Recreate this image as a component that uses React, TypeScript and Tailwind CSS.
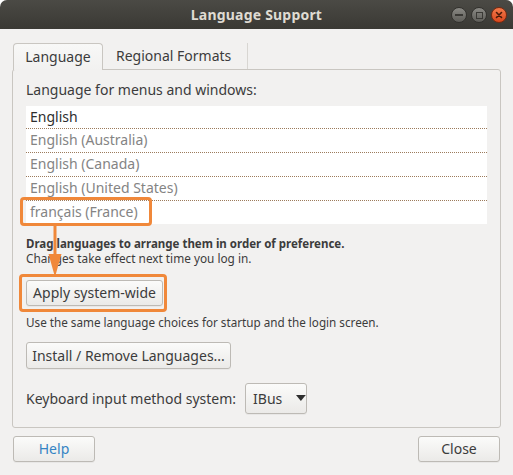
import React from "react";

function WinButtons() {
  return (
    <div className="absolute right-[6px] top-[7px] flex gap-[4px]">
      <div className="w-[16px] h-[16px] rounded-full bg-gradient-to-b from-[#8a8984] to-[#5e5d58] border border-[#33322e] flex items-center justify-center">
        <div className="w-[8px] h-[2px] bg-[#3a3935]" />
      </div>
      <div className="w-[16px] h-[16px] rounded-full bg-gradient-to-b from-[#8a8984] to-[#5e5d58] border border-[#33322e] flex items-center justify-center">
        <div className="w-[7px] h-[7px] border-[1.5px] border-[#3a3935]" />
      </div>
      <div className="w-[16px] h-[16px] rounded-full bg-gradient-to-b from-[#f47a4a] to-[#d9461c] border border-[#7a2a10] flex items-center justify-center">
        <svg width="8" height="8" viewBox="0 0 8 8">
          <path d="M1.5 1.5 L6.5 6.5 M6.5 1.5 L1.5 6.5" stroke="#4a1a08" strokeWidth="1.6" strokeLinecap="round" />
        </svg>
      </div>
    </div>
  );
}

const btn =
  "flex items-center justify-center rounded-[3px] border border-[#bdbab5] bg-gradient-to-b from-[#fbfbfa] to-[#ebeae8] text-[14px] text-[#3c3c3c] shadow-[0_1px_0_rgba(0,0,0,0.04)]";

export default function App() {
  const langs = ["English", "English (Australia)", "English (Canada)", "English (United States)", "français (France)"];
  return (
    <div className="relative w-[513px] h-[475px] bg-white overflow-hidden font-['Noto_Sans',sans-serif] text-[#3c3c3c]">
      <div className="flex flex-col h-full rounded-t-[7px] overflow-hidden bg-[#f2f1f0]">
        <div className="relative h-[29px] shrink-0 bg-gradient-to-b from-[#4b4a45] to-[#3a3934] flex items-center justify-center">
          <span className="text-[14px] font-bold text-[#dfdbd2] tracking-[0.2px]">Language Support</span>
          <WinButtons />
        </div>

        <div className="flex flex-col pl-[12px] pt-[14px]">
          <div className="flex h-[26px] pl-[1px]">
            <div className="relative z-10 w-[90px] h-[27px] border border-b-0 border-[#c9c6c1] rounded-t-[4px] bg-gradient-to-b from-[#f8f8f7] to-[#f2f1f0] flex items-center justify-center pb-[2px] text-[14px] text-[#3c3c3c]">
              Language
            </div>
            <div className="w-[145px] h-[26px] flex items-center pl-[13px] pb-[1px] text-[14px] text-[#3c3c3c] border-r border-[#d8d6d2]">
              Regional Formats
            </div>
          </div>

          <div className="w-[489px] h-[359px] border border-[#c9c6c1] rounded-[3px] flex flex-col pl-[13px] pt-[10px]">
            <div className="text-[14px] leading-[20px] text-[#3c3c3c]">Language for menus and windows:</div>
            <div className="mt-[6px] w-[461px] bg-white flex flex-col">
              {langs.map((l, i) => (
                <div
                  key={l}
                  className={
                    (i === 0 || i === 4 ? "h-[23px] " : "h-[24px] ") +
                    (i < 4 ? "border-b border-dotted border-[#9c7b5c] " : "") +
                    "flex items-center pl-[4px] pb-[2px] text-[14px] " +
                    (i === 0 ? "text-[#2e2e2e]" : "text-[#848484]")
                  }
                >
                  {l}
                </div>
              ))}
            </div>
            <div className="mt-[12px] text-[11.5px] leading-[15px] font-bold text-[#3c3c3c]">
              Drag languages to arrange them in order of preference.
            </div>
            <div className="text-[11.8px] leading-[15px] text-[#3c3c3c]">Changes take effect next time you log in.</div>
            <div className={btn + " mt-[14px] w-[137px] h-[26px] pb-[1px]"}>Apply system-wide</div>
            <div className="mt-[9px] text-[11.7px] leading-[15px] text-[#3c3c3c]">
              Use the same language choices for startup and the login screen.
            </div>
            <div className={btn + " mt-[12px] w-[205px] h-[27px] pb-[1px]"}>Install / Remove Languages...</div>
            <div className="mt-[14px] flex items-center gap-[9px]">
              <span className="text-[14px] text-[#3c3c3c]">Keyboard input method system:</span>
              <div className={btn + " w-[62px] h-[31px] justify-start pl-[7px] gap-[14px] pb-[1px]"}>
                <span>IBus</span>
                <svg width="10" height="6" viewBox="0 0 10 6">
                  <path d="M0 0 L10 0 L5 6 Z" fill="#2e2e2e" />
                </svg>
              </div>
            </div>
          </div>

          <div className="mt-[8px] w-[489px] flex justify-between pl-[1px] pr-[1px]">
            <div className={btn + " w-[82px] h-[26px] pb-[1px] text-[#3584c4]"}>Help</div>
            <div className={btn + " w-[82px] h-[26px] pb-[1px]"}>Close</div>
          </div>
        </div>
      </div>

      {/* annotations */}
      <div className="absolute left-[20px] top-[197px] w-[132px] h-[29px] border-[3px] border-[#f0883a] rounded-[4px]" />
      <div className="absolute left-[19px] top-[274px] w-[148px] h-[38px] border-[3px] border-[#f0883a] rounded-[4px]" />
      <svg className="absolute left-[45px] top-[225px]" width="20" height="54" viewBox="0 0 20 54">
        <line x1="10" y1="0" x2="10" y2="33" stroke="#f0883a" strokeWidth="3" />
        <polygon points="3.5,29 16.5,29 10,52" fill="#f0883a" />
      </svg>
    </div>
  );
}
